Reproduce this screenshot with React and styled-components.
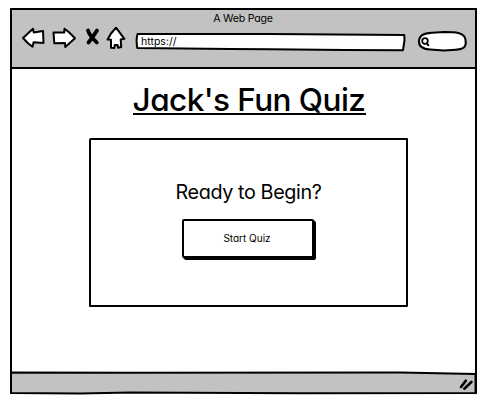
import React from 'react';
import styled, { createGlobalStyle } from 'styled-components';

const GlobalStyle = createGlobalStyle`
  * { box-sizing: border-box; }
  body {
    margin: 0;
    background: #fff;
    color: #000;
    font-family: Inter, "Open Sans", sans-serif;
    font-feature-settings: "cv11" 1;
  }
`;

const Page = styled.div`
  width: 485px;
  height: 405px;
  padding: 8px 0 0 10px;
  overflow: hidden;
`;

const BrowserWindow = styled.main`
  width: 467px;
  height: 386px;
  border: 2px solid #000;
  border-bottom: 0;
  border-radius: 1px;
  display: flex;
  flex-direction: column;
`;

const Chrome = styled.header`
  height: 59px;
  flex: none;
  background: #c2c2c2;
  border-bottom: 2px solid #000;
`;

const WindowTitle = styled.div`
  height: 17px;
  padding-right: 1px;
  line-height: 18px;
  text-align: center;
  font-size: 10.6px;
  letter-spacing: -0.2px;
  white-space: pre;
`;

const Toolbar = styled.nav`
  height: 30px;
  display: flex;
  padding-left: 9px;
`;

const Icon = styled.svg`
  display: block;
  flex: none;
  overflow: visible;
  fill: ${(p) => p.$fill || '#fff'};
  stroke: #000;
  stroke-width: 2px;
  stroke-linejoin: round;
  stroke-linecap: round;
`;

const Field = styled.div`
  position: relative;
  flex: none;
  width: ${(p) => p.$width}px;
  height: 22px;
  margin: 3px 0 0 ${(p) => p.$gap}px;
`;

const FieldOutline = styled(Icon)`
  position: absolute;
  inset: 0;
`;

const Address = styled.span`
  position: relative;
  display: block;
  padding-left: 6px;
  line-height: 23px;
  font-size: 10.5px;
  letter-spacing: 0.02px;
`;

const Content = styled.section`
  flex: 1;
  display: flex;
  flex-direction: column;
  align-items: center;
  padding-left: 9px;
`;

const Heading = styled.h1`
  width: 233px;
  height: 46px;
  margin: 0 0 0 2px;
  border-bottom: 2px solid #000;
  display: flex;
  justify-content: center;
  font-size: 31.5px;
  line-height: 61px;
  font-weight: 500;
  letter-spacing: -0.55px;
  white-space: pre;
`;

const Card = styled.div`
  width: 319px;
  height: 169px;
  margin: 23px 0 0;
  border: 2px solid #000;
  border-radius: 2px 1px 1px 1px;
  display: flex;
  flex-direction: column;
  align-items: center;
`;

const Prompt = styled.h2`
  margin: 39px 0 0;
  padding-left: 1px;
  height: 40px;
  font-size: 19.8px;
  line-height: 26px;
  font-weight: 400;
  letter-spacing: -0.4px;
  white-space: pre;
`;

const StartButton = styled.button`
  width: 132px;
  height: 39px;
  margin: 0 1px 0 0;
  padding: 0 1px 1px 0;
  border: 2px solid #000;
  border-radius: 2px;
  background: #fff;
  box-shadow: 1px 1px 0 #000, 2px 2px 0 #000;
  color: #000;
  font-family: inherit;
  font-feature-settings: inherit;
  font-size: 10px;
  letter-spacing: 0;
`;

const StatusBar = styled.footer`
  position: relative;
  height: 24px;
  flex: none;
  margin: 0 -2px;
`;

const StatusDrawing = styled(Icon)`
  position: absolute;
  inset: 0;
`;

export default function App() {
  return (
    <>
      <GlobalStyle />
      <Page>
        <BrowserWindow>
          <Chrome>
            <WindowTitle>A Web Page</WindowTitle>
            <Toolbar>
              <Icon width="94" height="30" viewBox="21 27 94 30">
                <path d="M23 38 L33 28.8 L33.7 32.4 L43 31 L43.5 43 L33.6 42.2 L32.5 46.8 L28 43.2Z" />
                <path d="M53.5 32.5 L64.2 32.6 L64.5 28.8 L69 32.2 L75 38.2 L65.3 47 L65 43 L54.3 43.3Z" />
                <path d="M88 30.5 Q89.5 35.5 96.8 42.5 M97 30.5 Q93 37 88.5 42.5" fill="none" strokeWidth="3.8" />
                <path d="M116 27.7 L124.4 38.8 L120.7 39.5 L121.2 47 L118 47.8 L117.6 45 L114.8 45 L114.3 48 L111 47.7 L111 39.8 L107.6 39.5 L111 33.5Z" />
              </Icon>
              <Field $width={270} $gap={20}>
                <FieldOutline width="270" height="22" viewBox="0 0 270 22">
                  <path d="M2.5 4 L135 4 L269.3 5 L269.5 10 L268 20.2 L210 20 L135 19.3 L95 19 L2.3 18 Q.8 10 2.5 4Z" />
                </FieldOutline>
                <Address>https://</Address>
              </Field>
              <Field $width={49} $gap={13}>
                <FieldOutline width="49" height="22" viewBox="418 30 49 22">
                  <path d="M419 41 C419 35 425 33 432 32.7 L444 32 C454 32 465 32 465.5 40 C467 48 462 49.2 456 49.7 L444 50.5 L430 49.5 C422 49 418.7 46 419 41Z" />
                  <circle cx="425" cy="41" r="2.8" strokeWidth="1.7" />
                  <path d="M427 43.5 L428.3 45.3" />
                </FieldOutline>
              </Field>
            </Toolbar>
          </Chrome>
          <Content>
            <Heading>Jack's Fun Quiz</Heading>
            <Card>
              <Prompt>Ready to Begin?</Prompt>
              <StartButton>Start Quiz</StartButton>
            </Card>
          </Content>
          <StatusBar>
            <StatusDrawing $fill="none" width="467" height="24" viewBox="10 370 467 24">
              <path d="M11 372.5 L130 372.8 L400 372.5 L475.5 374 L475.5 393 L300 393.3 L130 392.5 L80 393.5 L11 393Z" fill="#c2c2c2" />
              <path d="M461 387 L465.8 380.7 M464.3 388.7 L471.4 382" strokeWidth="2.6" />
            </StatusDrawing>
          </StatusBar>
        </BrowserWindow>
      </Page>
    </>
  );
}
